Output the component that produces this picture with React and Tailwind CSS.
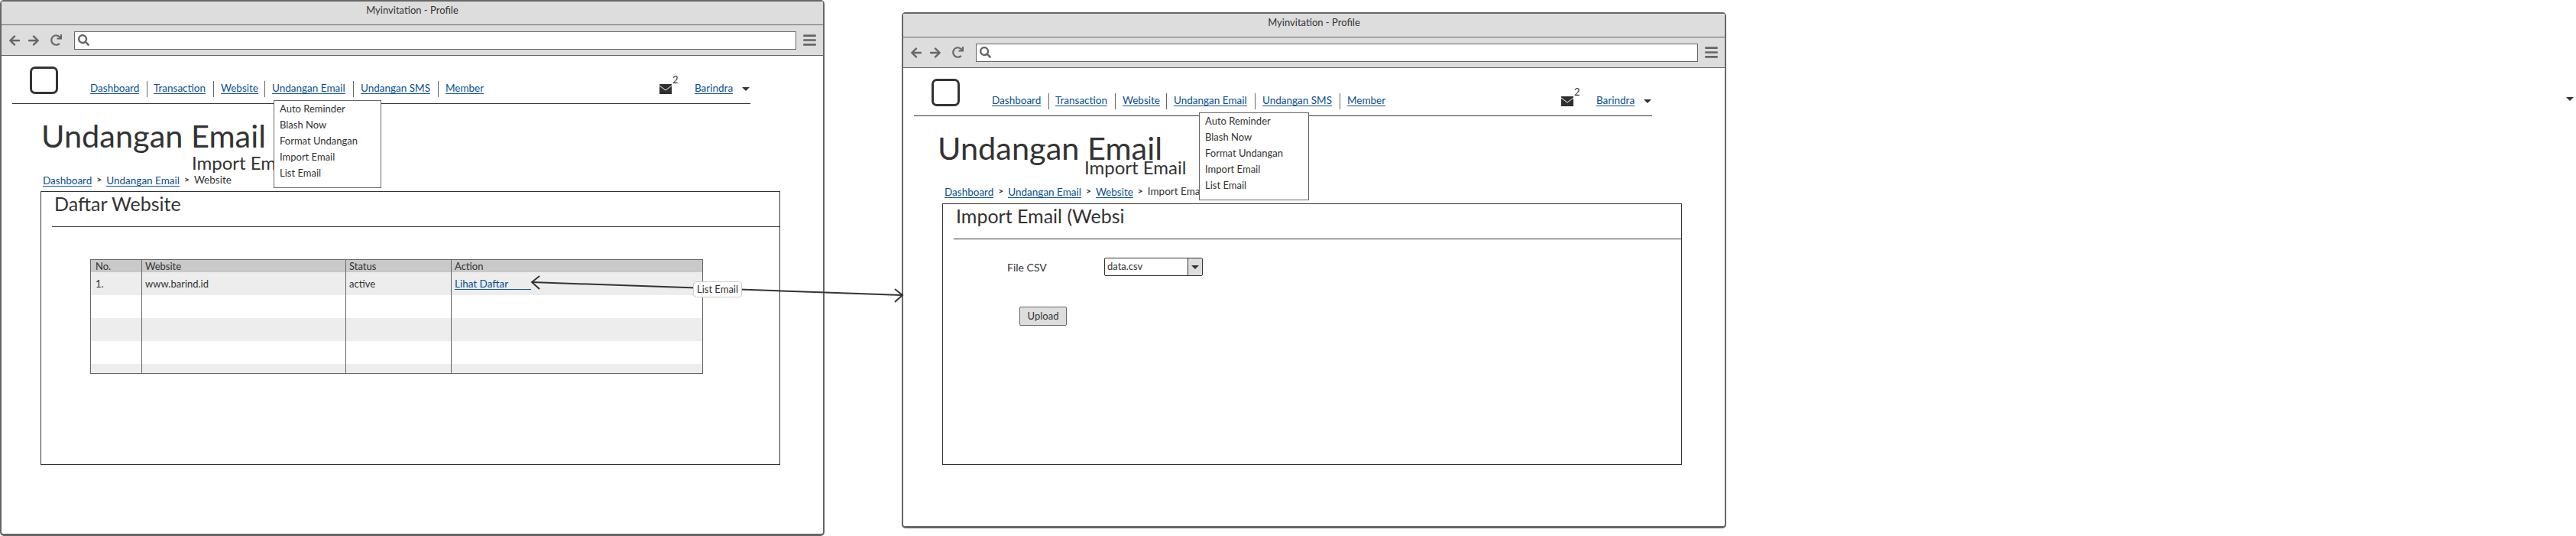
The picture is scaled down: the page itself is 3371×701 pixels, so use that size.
import { FaArrowLeft, FaArrowRight, FaBars, FaRedo, FaSearch } from "react-icons/fa"

const navItems = [
    { label: 'Dashboard', box: 'w-[75px] border-r' },
    { label: 'Transaction', box: 'w-[87px] pl-[8px] border-r' },
    { label: 'Website', box: 'w-[67px] pl-[9px] border-r' },
    { label: 'Undangan Email', box: 'w-[116px] pl-[9px] border-r' },
    { label: 'Undangan SMS', box: 'w-[111px] pl-[9px] border-r' },
    { label: 'Member', box: 'w-[60px] pl-[9px]' },
]

const menuItems = ['Auto Reminder', 'Blash Now', 'Format Undangan', 'Import Email', 'List Email']

const Link = ({ children, className = '' }) => (
    <span className={`block h-[17px] w-fit border-b border-[#0a5596] text-[13.5px] leading-[18px] text-[#0a4f8f] ${className}`}>{children}</span>
)

const Chevron = () => <span className="mx-[6px] text-[12px] font-bold leading-[16px] text-[#333]">&gt;</span>

const Caret = ({ className = '' }) => (
    <svg width="10" height="5" viewBox="0 0 10 5" className={className}><path d="M0 0h10L5 5z" fill="#333" /></svg>
)

const MailIcon = () => (
    <svg width="16" height="13" viewBox="0 0 16 13" className="block">
        <path d="M0 0h16v13H0z" fill="#2f2f2f" />
        <path d="M0 2l8 6 8-6" fill="none" stroke="#fff" strokeWidth="1" />
    </svg>
)

const BrowserWindow = ({ frame, headingRow, subtitle, menu, crumbs, current, panel, panelTitle, children }) => (
    <div className={`absolute flex w-[1079px] flex-col rounded-[5px] border-2 border-b-[3px] border-[#666] bg-white ${frame}`}>
        <div className="flex h-[31px] items-center justify-center border-b border-[#666] bg-[#ddd] pb-[6px] text-[13px] text-[#333]">Myinvitation - Profile</div>
        <div className="flex h-[40px] items-center border-b border-[#666] bg-[#ddd] text-[#666]">
            <FaArrowLeft size={16} className="ml-[9px]" />
            <FaArrowRight size={16} className="ml-[9px]" />
            <FaRedo size={15} className="ml-[14px]" />
            <div className="ml-[16px] flex h-[24px] w-[945px] items-center border border-[#666] bg-white pl-[4px]">
                <FaSearch size={15} />
            </div>
            <FaBars size={19} className="ml-[8px]" />
        </div>
        <div className="mx-[14px] flex h-[63px] w-[966px] border-b border-[#333]">
            <div className="ml-[23px] mt-[14px] h-[36px] w-[37px] rounded-[7px] border-[3px] border-[#333]" />
            <div className="ml-[42px] mt-[33px] flex h-[21px]">
                {navItems.map((item) => (
                    <div key={item.label} className={`h-[21px] border-[#666] ${item.box}`}>
                        <Link>{item.label}</Link>
                    </div>
                ))}
            </div>
            <div className="ml-[229px] mt-[37px] flex">
                <div className="relative h-[13px] w-[16px]">
                    <MailIcon />
                    <span className="absolute left-[17px] top-[-12px] text-[13px] leading-[13px] text-[#333]">2</span>
                </div>
                <Link className="ml-[30px] -mt-[4px]">Barindra</Link>
                <Caret className="ml-[12px] mt-[4px]" />
            </div>
        </div>
        <div className="h-[114px]">
            <h1 className={`mt-[21px] h-[40px] text-[41.5px] leading-[40px] text-[#333] ${headingRow}`}>Undangan Email</h1>
            <div className={`h-[24px] text-[24px] leading-[24px] text-[#333] ${subtitle}`}>Import Email</div>
            <div className="ml-[54px] mt-[1px] flex h-[18px] items-center text-[13.5px] text-[#333]">
                {crumbs.map((crumb) => (
                    <span key={crumb} className="flex items-center">
                        <Link>{crumb}</Link>
                        <Chevron />
                    </span>
                ))}
                <span>{current}</span>
            </div>
        </div>
        <div className={`ml-[51px] w-[968px] border border-[#333] bg-white ${panel}`}>
            <div className="ml-[14px] h-[46px] border-b border-[#333] pl-[3px] pt-[1px] text-[25px] leading-[28px] text-[#333]">{panelTitle}</div>
            {children}
        </div>
        <div className={`absolute top-[129px] h-[115px] border border-[#666] bg-white pl-[7px] text-[13px] leading-[21px] text-[#333] ${menu}`}>
            {menuItems.map((item) => <div key={item} className="h-[21px]">{item}</div>)}
        </div>
    </div>
)

const WebsiteTable = () => {
    const rows = [['1.', 'www.barind.id', 'active', true], [], [], [], []]
    const heights = ['h-[30px]', 'h-[30px]', 'h-[30px]', 'h-[30px]', 'h-[12px]']
    return (
        <div className="ml-[64px] mt-[42px] w-[802px] overflow-hidden border border-[#666] text-[13px] text-[#333]">
            <div className="grid h-[16px] grid-cols-[67px_267px_138px_1fr] bg-[#c9c9c9] leading-[16px]">
                <div className="border-r border-[#666] pl-[6px]">No.</div>
                <div className="border-r border-[#666] pl-[4px]">Website</div>
                <div className="border-r border-[#666] pl-[4px]">Status</div>
                <div className="pl-[4px]">Action</div>
            </div>
            {rows.map((row, i) => (
                <div key={i} className={`grid grid-cols-[67px_267px_138px_1fr] leading-[30px] ${heights[i]} ${i % 2 === 0 ? 'bg-[#ededed]' : 'bg-white'}`}>
                    <div className="border-r border-[#666] pl-[6px]">{row[0]}</div>
                    <div className="border-r border-[#666] pl-[4px]">{row[1]}</div>
                    <div className="border-r border-[#666] pl-[4px]">{row[2]}</div>
                    <div className="pl-[4px] pt-[6px]">
                        {row[3] && <Link className="w-[100px]!">Lihat Daftar</Link>}
                    </div>
                </div>
            ))}
        </div>
    )
}

const ImportForm = () => (
    <div className="text-[14px] text-[#333]">
        <div className="mt-[24px] flex h-[24px] items-center">
            <span className="ml-[84px] w-[127px]">File CSV</span>
            <div className="flex h-[24px] w-[129px] items-center justify-between rounded-[2px] border border-[#333] bg-white pl-[3px] text-[13px]">
                <span>data.csv</span>
                <div className="flex h-full w-[19px] items-center justify-center border-l border-[#333] bg-[#ddd]">
                    <Caret />
                </div>
            </div>
        </div>
        <button className="ml-[100px] mt-[40px] h-[25px] w-[62px] rounded-[2px] border border-[#666] bg-[#ddd] text-[13px]">Upload</button>
    </div>
)

export default function App() {
    return (
        <div className="relative h-[701px] w-[3371px] overflow-hidden bg-white font-['Lato',sans-serif]">
            <BrowserWindow
                frame="left-0 top-0 h-[701px]"
                headingRow="ml-[52px]"
                subtitle="ml-[249px] mt-[4px]"
                menu="left-[356px] w-[141px]"
                crumbs={['Dashboard', 'Undangan Email']}
                current="Website"
                panel="h-[358px]"
                panelTitle="Daftar Website"
            >
                <WebsiteTable />
            </BrowserWindow>

            <BrowserWindow
                frame="left-[1180px] top-[16px] h-[675px]"
                headingRow="ml-[45px]"
                subtitle="ml-[237px] -mt-[6px] mb-[10px]"
                menu="left-[387px] w-[144px]"
                crumbs={['Dashboard', 'Undangan Email', 'Website']}
                current="Import Email"
                panel="h-[342px]"
                panelTitle="Import Email (Websi"
            >
                <ImportForm />
            </BrowserWindow>

            {/* link between the two screens */}
            <svg width="3371" height="701" className="pointer-events-none absolute left-0 top-0">
                <path d="M696 369L1180 386" fill="none" stroke="#333" strokeWidth="2" />
                <path d="M706 361L696 369L706 378M1171 378L1181 386L1171 395" fill="none" stroke="#333" strokeWidth="2" />
            </svg>
            <div className="absolute left-[907px] top-[368px] flex h-[21px] w-[64px] items-center justify-center rounded-[4px] border border-[#ccc] bg-white text-[13px] text-[#333]">List Email</div>
            <Caret className="absolute left-[3358px] top-[127px]" />
        </div>
    )
}
